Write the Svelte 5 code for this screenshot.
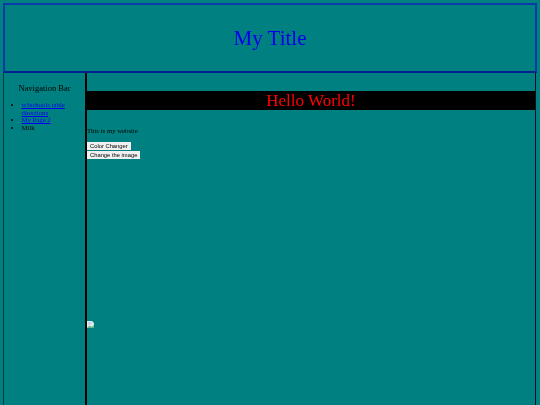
<script>
  const links = [
    { text: 'w3schools table directions', href: '#a' },
    { text: 'My Page 2', href: '#b' }
  ];
</script>

<div class="page">
  <header class="top"><h1>My Title</h1></header>
  <div class="columns">
    <nav class="side">
      <p class="navtitle">Navigation Bar</p>
      <ul>
        {#each links as l}
          <li><a href={l.href}>{l.text}</a></li>
        {/each}
        <li>Milk</li>
      </ul>
    </nav>
    <main class="content">
      <h2>Hello World!</h2>
      <p class="intro">This is my website</p>
      <div class="btns">
        <button>Color Changer</button>
        <button>Change the image</button>
      </div>
      <svg class="broken" width="7" height="7" viewBox="0 0 7 7" aria-hidden="true">
        <path d="M0 0 H5 L7 2 V7 H0 Z" fill="#dfeeea"/>
        <path d="M0 7 L2.5 4.5 L4.5 6 L7 4 V7 Z" fill="#6fb486"/>
        <rect x="1" y="1" width="3.5" height="2.5" fill="#bcd6ee"/>
      </svg>
    </main>
  </div>
</div>

<style>
  :global(body) {
    margin: 0;
    background: #008080;
    overflow: hidden;
  }
  .page {
    height: 405px;
    padding: 3px 3px 0 3px;
    box-sizing: border-box;
    display: flex;
    flex-direction: column;
    font-family: "Liberation Serif", serif;
    color: #000;
    filter: blur(0.3px);
  }
  .top {
    height: 70px;
    flex: none;
    box-sizing: border-box;
    border: 2px solid #0a3ca8;
    border-bottom-color: #04208c;
    display: flex;
    align-items: center;
    justify-content: center;
  }
  h1 {
    margin: 0;
    font-size: 21px;
    font-weight: 400;
    color: #0000ee;
  }
  .columns {
    flex: 1;
    display: flex;
    min-height: 0;
    padding-right: 1px;
  }
  .side {
    width: 84px;
    flex: none;
    box-sizing: border-box;
    border-left: 1px solid #003a3a;
    border-right: 2px solid #000;
    font-size: 6.75px;
  }
  .navtitle {
    margin: 10px 0 0;
    text-align: center;
    font-size: 8.5px;
  }
  ul {
    margin: 8px 0 0;
    padding-left: 17.5px;
    line-height: 7.6px;
  }
  a { color: #0000ee; }
  .content {
    flex: 1;
    min-width: 0;
    position: relative;
    border-right: 1px solid #012;
  }
  h2 {
    margin: 18px 0 0;
    height: 19px;
    line-height: 19px;
    background: #000;
    color: #f00;
    text-align: center;
    font-size: 17px;
    font-weight: 400;
  }
  .intro {
    margin: 17px 0 0 0;
    font-size: 6.75px;
    line-height: 8px;
  }
  .btns {
    margin: 7px 0 0 0;
    display: flex;
    flex-direction: column;
    align-items: flex-start;
    gap: 1px;
  }
  button {
    height: 8px;
    padding: 0 3px;
    border: 0;
    background: #f0f0f0;
    font-family: "Liberation Sans", sans-serif;
    font-size: 5.8px;
    line-height: 8px;
    color: #000;
  }
  .broken {
    position: absolute;
    left: 0;
    top: 248px;
  }
</style>
